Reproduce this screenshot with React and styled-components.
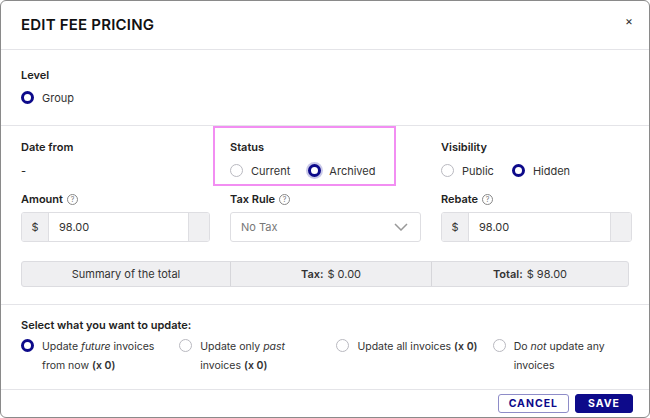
import React from 'react';
import styled, { createGlobalStyle } from 'styled-components';

const Global = createGlobalStyle`
  html, body { margin: 0; background: #fff; }
  body { font-family: Inter, "Liberation Sans", sans-serif; color: #222; }
`;

const Modal = styled.div`
  width: 650px; height: 418px; box-sizing: border-box;
  border: 1px solid #8a8a8a; border-radius: 6px; overflow: hidden;
  display: flex; flex-direction: column; background: #fff;
`;
const Header = styled.div`
  height: 49px; flex: none; box-sizing: border-box; border-bottom: 1px solid #e4e4e8;
  display: flex; align-items: center; justify-content: space-between; padding: 0 16px 2px 20px;
`;
const Title = styled.h1`
  margin: 0; font-size: 15px; font-weight: 600; letter-spacing: 0.2px; color: #111;
`;
const Close = styled.span` font-size: 12px; color: #333; margin-top: -8px; `;
const Section = styled.div`
  flex: none; padding: ${p => p.pad || '0 20px'}; border-bottom: ${p => p.line ? '1px solid #e4e4e8' : 'none'};
`;
const Label = styled.div`
  font-size: 11px; font-weight: 600; color: #222; display: flex; align-items: center; gap: 4px;
`;
const Grid = styled.div`
  display: grid; grid-template-columns: 189px 191px 191px; column-gap: 20px;
`;
const Field = styled.div`
  position: relative; height: ${p => p.h ? p.h + 'px' : 'auto'}; box-sizing: border-box;
`;
const Highlight = styled.div`
  position: absolute; left: -17px; top: -14px; width: 183px; height: 60px;
  border: 2px solid #f28ef2; box-sizing: border-box;
`;
const Radios = styled.div` display: flex; gap: ${p => p.gap ?? 20}px; margin-top: 8px; `;
const RadioItem = styled.label`
  display: flex; align-items: flex-start; gap: 8px; font-size: ${p => p.small ? 10.5 : 11}px;
  color: #333; line-height: ${p => p.small ? 19 : 18}px;
  width: ${p => p.w ? p.w + 'px' : 'auto'}; box-sizing: border-box; padding-right: ${p => p.w ? 8 : 0}px;
  b { font-weight: 600; }
`;
const Dot = styled.span`
  width: 13px; height: 13px; border-radius: 50%; box-sizing: border-box; flex: none; margin-top: 2px;
  border: ${p => p.on ? '3px solid #0d0a8a' : '1px solid #b9b9c0'};
  background: #fff;
  box-shadow: ${p => p.ring ? '0 0 0 2px #c9c8e8' : 'none'};
`;
const Help = styled.span`
  width: 9px; height: 9px; border: 1px solid #888; border-radius: 50%; font-size: 7px; color: #777;
  display: inline-flex; align-items: center; justify-content: center; font-weight: 400;
`;
const InputBox = styled.div`
  display: flex; height: 28px; border: 1px solid #dedee2; border-radius: 3px; overflow: hidden;
  margin-top: 6px; font-size: 11px; color: #333;
`;
const Addon = styled.div`
  background: #f0f0f2; width: ${p => p.w}px; display: flex; align-items: center; justify-content: center;
  border-${p => p.side}: 1px solid #dedee2;
`;
const InputText = styled.div` flex: 1; display: flex; align-items: center; padding-left: 10px; `;
const Select = styled(InputBox)`
  align-items: center; justify-content: space-between; padding: 0 12px 0 10px; color: #777;
`;
const Summary = styled.div`
  display: grid; grid-template-columns: 208px 201px 1fr; height: 24px; margin-top: 19px;
  border: 1px solid #dcdce0; border-radius: 3px; background: #efeff1; font-size: 11px; color: #333;
`;
const Cell = styled.div`
  display: flex; align-items: center; justify-content: center; gap: 4px;
  border-left: ${p => p.first ? 'none' : '1px solid #d6d6da'};
  b { font-weight: 600; }
`;
const Footer = styled.div`
  flex: 1; display: flex; justify-content: flex-end; align-items: center; gap: 6px; padding: 0 16px 0 0;
`;
const Button = styled.button`
  height: 19px; padding: 0 ${p => p.primary ? 12 : 10}px; border-radius: 3px; font-family: inherit;
  font-size: 10.5px; font-weight: 700; letter-spacing: 1px; cursor: pointer;
  background: ${p => p.primary ? '#0d0a8a' : '#fff'}; color: ${p => p.primary ? '#fff' : '#0d0a8a'};
  border: 1px solid ${p => p.primary ? '#0d0a8a' : '#8e8cc8'};
`;

const Radio = ({ on, ring, children, w, small }) => (
  <RadioItem w={w} small={small}><Dot on={on} ring={ring} /><span>{children}</span></RadioItem>
);

export default function App() {
  return (
    <Modal>
      <Global />
      <Header><Title>EDIT FEE PRICING</Title><Close>×</Close></Header>
      <Section line pad="18px 20px 18px">
        <Label>Level</Label>
        <Radios style={{ marginTop: 7 }}><Radio on>Group</Radio></Radios>
      </Section>
      <Section pad="14px 20px 17px" line>
        <Grid>
          <Field h={52}>
            <Label>Date from</Label>
            <div style={{ fontSize: 11, marginTop: 10 }}>-</div>
          </Field>
          <Field h={52}>
            <Highlight />
            <Label>Status</Label>
            <Radios gap={18}><Radio>Current</Radio><Radio on ring>Archived</Radio></Radios>
          </Field>
          <Field h={52}>
            <Label>Visibility</Label>
            <Radios gap={18}><Radio>Public</Radio><Radio on>Hidden</Radio></Radios>
          </Field>
          <Field>
            <Label>Amount <Help>?</Help></Label>
            <InputBox><Addon w={26} side="right">$</Addon><InputText>98.00</InputText><Addon w={20} side="left" /></InputBox>
          </Field>
          <Field>
            <Label>Tax Rule <Help>?</Help></Label>
            <Select>No Tax
              <svg width="14" height="8" viewBox="0 0 14 8"><path d="M1 1l6 6 6-6" fill="none" stroke="#999" strokeWidth="1.5" /></svg>
            </Select>
          </Field>
          <Field>
            <Label>Rebate <Help>?</Help></Label>
            <InputBox><Addon w={26} side="right">$</Addon><InputText>98.00</InputText><Addon w={20} side="left" /></InputBox>
          </Field>
        </Grid>
        <Summary>
          <Cell first>Summary of the total</Cell>
          <Cell><b>Tax:</b> $ 0.00</Cell>
          <Cell><b>Total:</b> $ 98.00</Cell>
        </Summary>
      </Section>
      <Section line pad="13px 20px 14px">
        <Label>Select what you want to update:</Label>
        <Radios gap={0} style={{ marginTop: 5 }}>
          <Radio small on w={159}>Update <i>future</i> invoices from now <b>(x 0)</b></Radio>
          <Radio small w={158}>Update only <i>past</i> invoices <b>(x 0)</b></Radio>
          <Radio small w={157}>Update all invoices <b>(x 0)</b></Radio>
          <Radio small w={137}>Do <i>not</i> update any invoices</Radio>
        </Radios>
      </Section>
      <Footer><Button>CANCEL</Button><Button primary>SAVE</Button></Footer>
    </Modal>
  );
}
